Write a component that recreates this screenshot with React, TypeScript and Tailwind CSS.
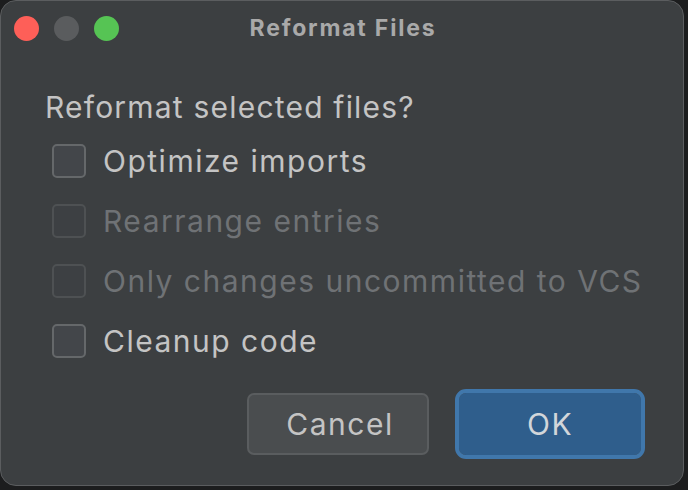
import React from "react";

const font = { fontFamily: "Inter, 'Liberation Sans', sans-serif" };

function Row({ label, disabled }: { label: string; disabled?: boolean }) {
  return (
    <div className="flex items-center h-[60px]">
      <div
        className={
          "w-[34px] h-[34px] rounded-[5px] border-2 shrink-0 " +
          (disabled ? "border-[#4e5153] bg-[#3d4043]" : "border-[#65686a] bg-[#43464a]")
        }
      />
      <span
        className={
          "ml-[17px] text-[30px] leading-none tracking-[1.5px] " +
          (disabled ? "text-[#6f7275]" : "text-[#c4c4c4]")
        }
      >
        {label}
      </span>
    </div>
  );
}

export default function App() {
  return (
    <div className="w-[688px] h-[490px] bg-[#1c1d1e] overflow-hidden" style={font}>
      <div className="w-[684px] h-[486px] rounded-[16px] border border-[#5b5d5f] bg-[#3c3f41] flex flex-col">
        <div className="h-[54px] flex items-center relative px-[13px]">
          <div className="flex gap-[15px] mt-[1px]">
            <div className="w-[25px] h-[25px] rounded-full bg-[#fe5f58]" />
            <div className="w-[25px] h-[25px] rounded-full bg-[#5a5c5e]" />
            <div className="w-[25px] h-[25px] rounded-full bg-[#56c454]" />
          </div>
          <div className="absolute inset-0 flex items-center justify-center">
            <span className="text-[23px] font-bold text-[#a9a9a9] tracking-[1.8px] ml-[2px]">Reformat Files</span>
          </div>
        </div>
        <div className="pl-[44px] pt-[37px]">
          <div className="text-[30px] leading-none text-[#c4c4c4] tracking-[1.2px]">Reformat selected files?</div>
        </div>
        <div className="pl-[51px] mt-[9px] flex flex-col">
          <Row label="Optimize imports" />
          <Row label="Rearrange entries" disabled />
          <Row label="Only changes uncommitted to VCS" disabled />
          <Row label="Cleanup code" />
        </div>
        <div className="flex justify-end pr-[42px] mt-[22px] gap-[30px]">
          <button className="w-[182px] h-[62px] rounded-[7px] border-2 border-[#5a5d5f] bg-[#4a4d4f] text-[30px] text-[#c4c4c4] tracking-[1.5px] pl-[4px]">
            Cancel
          </button>
          <button className="w-[182px] h-[62px] rounded-[7px] bg-[#2f5e8c] outline outline-[4px] outline-[#4077ab] text-[30px] text-[#d2d6da] tracking-[1.5px]">
            OK
          </button>
        </div>
      </div>
    </div>
  );
}
